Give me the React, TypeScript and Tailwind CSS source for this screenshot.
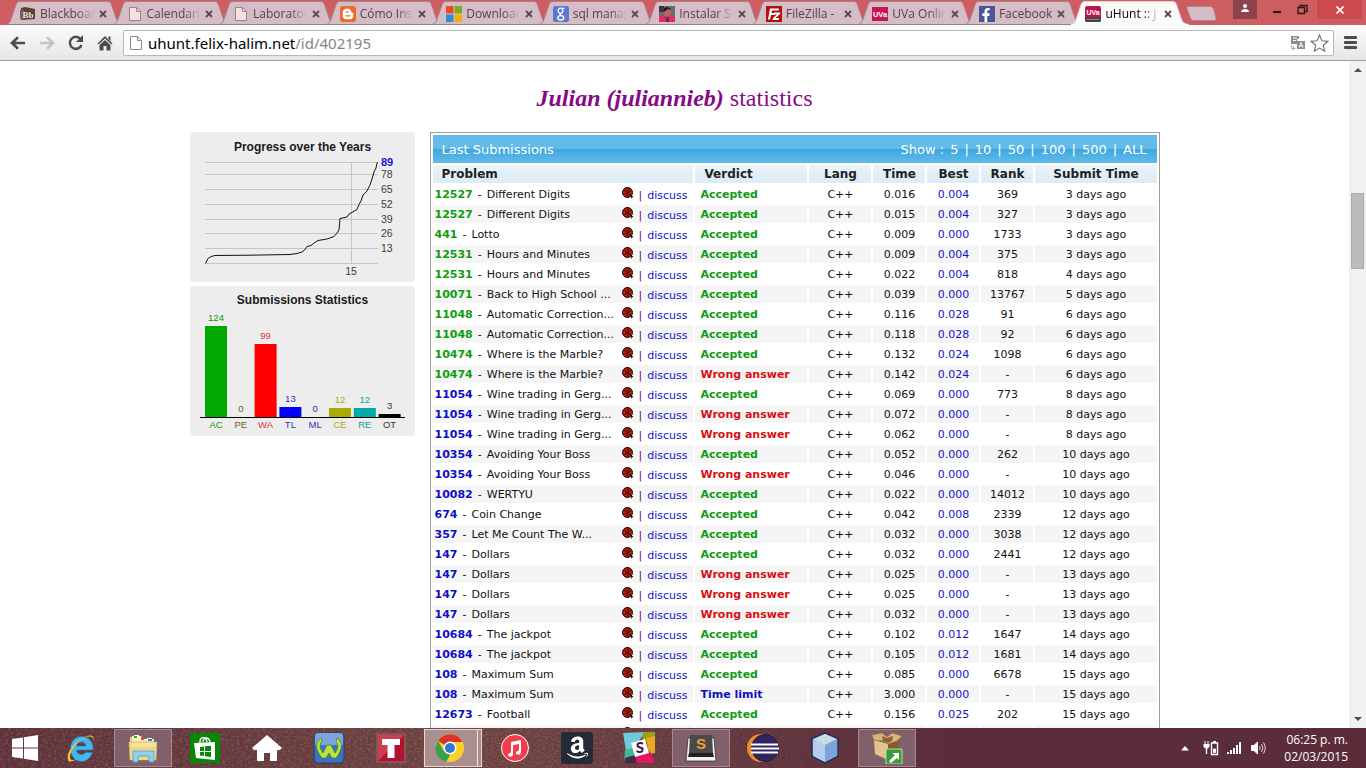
import React from 'react';
import { FaFacebookF, FaAmazon, FaBloggerB } from 'react-icons/fa';

const ui = "font-['Open_Sans','Noto_Sans',sans-serif]";

function PageIcon({ className = '' }: { className?: string }) {
  return (
    <svg viewBox="0 0 16 16" className={`size-4 shrink-0 ${className}`} fill="currentColor">
      <path d="M2.500 1.500h7l4 4v9h-11z" stroke="#8f8789" strokeWidth="1" />
      <path d="M9.500 1.500v4h4" fill="none" stroke="#8f8789" />
    </svg>
  );
}

const favicons: Record<string, React.ReactNode> = {
  bb: (
    <svg viewBox="0 0 16 16" className="size-4 shrink-0">
      <path d="M1 2l4-1 10 2v10l-14 1z" fill="#5b4038" />
      <path d="M0 4h4v9H0z" fill="#7a5b50" />
      <text x="8" y="12" textAnchor="middle" fontSize="9" fontWeight="700" fontFamily="Liberation Serif" fill="#efe3dc">Bb</text>
    </svg>
  ),
  page: <PageIcon className="text-[#f9dfe0]" />,
  blogger: (
    <span className="flex size-4 shrink-0 items-center justify-center rounded-[3px] bg-[#f0682a] text-white">
      <FaBloggerB className="size-3" />
    </span>
  ),
  microsoft: (
    <svg viewBox="0 0 16 16" className="size-4 shrink-0">
      <path d="M0 0h7.500v7.500H0z" fill="#ea4b27" />
      <path d="M8.500 0H16v7.500H8.500z" fill="#7fac1c" />
      <path d="M0 8.500h7.500V16H0z" fill="#2b8fd6" />
      <path d="M8.500 8.500H16V16H8.500z" fill="#f5ab12" />
    </svg>
  ),
  google: (
    <svg viewBox="0 0 16 16" className="size-4 shrink-0">
      <rect width="16" height="16" rx="2" fill="#5f78cf" />
      <g fill="none" stroke="#fff" strokeWidth="1.300">
        <ellipse cx="7.500" cy="4.800" rx="2.300" ry="2.600" />
        <path d="M9 2.300h2.500M7.500 7.400c-1.500 1.200.2 1.700 1.500 2.400" />
        <ellipse cx="7.800" cy="11.800" rx="3" ry="2.200" />
      </g>
    </svg>
  ),
  photo: (
    <svg viewBox="0 0 16 16" className="size-4 shrink-0">
      <path d="M0 0h16v16H0z" fill="#5f6f78" />
      <path d="M0 0h5v6H0z" fill="#3a3236" />
      <path d="M4 3c2-3 7-3 8 1v5l-3 3-4-2z" fill="#b5685c" />
      <path d="M4 5c0-5 7-5 8-1l-3-1-4 3z" fill="#281c20" />
      <path d="M0 10l5-1 3 3 3-3 5 2v5H0z" fill="#e22c63" />
      <path d="M6 10l2 2 2-2v6H7z" fill="#702838" />
    </svg>
  ),
  filezilla: (
    <svg viewBox="0 0 16 16" className="size-4 shrink-0">
      <path d="M0 0h16v16H0z" fill="#b3110f" />
      <path d="M4 2.500h9l-.5 2H6L5.500 7H9l-.5 2H5l-1 4.500H2z" fill="#fff" />
      <path d="M8 6.500h6.500l-.5 1.500-4.500 4H13l-.5 2H6.500l.5-2 4-3.500H8z" fill="#fff" />
    </svg>
  ),
  uva: (
    <svg viewBox="0 0 16 16" className="size-4 shrink-0">
      <path d="M0 1h16v14H0z" fill="#c81456" />
      <text x="8" y="11" textAnchor="middle" fontSize="7.500" fontWeight="700" fontFamily="Liberation Sans" fill="#fff">UVa</text>
    </svg>
  ),
  facebook: (
    <span className="flex size-4 shrink-0 items-end justify-end bg-[#4b5699] pr-0.5 text-white">
      <FaFacebookF className="size-3.5" />
    </span>
  ),
  uhunt: (
    <svg viewBox="0 0 16 16" className="size-4 shrink-0">
      <rect width="16" height="16" rx="2" fill="#c0144f" />
      <path d="M0 11h16v3a2 2 0 0 1-2 2H2a2 2 0 0 1-2-2z" fill="#4a4347" />
      <text x="8" y="8.500" textAnchor="middle" fontSize="7" fontWeight="700" fontFamily="Liberation Sans" fill="#fff">UVa</text>
      <path d="M2 13.500h12" stroke="#a39a9e" strokeDasharray="1.500 .6" />
    </svg>
  ),
};

const tabs = [
  ['bb', 'Blackboar'],
  ['page', 'Calendario'],
  ['page', 'Laborator'],
  ['blogger', 'Cómo Inst'],
  ['microsoft', 'Download'],
  ['google', 'sql manag'],
  ['photo', 'Instalar SQ'],
  ['filezilla', 'FileZilla -'],
  ['uva', 'UVa Onlin'],
  ['facebook', 'Facebook'],
  ['uhunt', 'uHunt :: J'],
];

function TabStrip() {
  return (
    <header className="flex h-[25px] shrink-0 items-start bg-[#cd5d61] pl-1.5">
      <div className="grid w-[1172px] min-w-0 grid-cols-11">
        {tabs.map(([icon, label], i) => {
          const active = i === tabs.length - 1;
          const whole = label === 'Facebook' || label === 'FileZilla -';
          return (
            <div key={label} className={`relative flex h-[25px] items-center pt-0.5 pl-3.5 ${active ? 'z-20' : ''}`}>
              <svg viewBox="0 0 118 25" preserveAspectRatio="none" className="absolute top-0 left-0 h-[25px] w-[calc(100%+11px)]">
                <path
                  d="M0 24.500C3 24 4 22 5 19.500L10 5C11 2 12 1.500 15 1.500H101C104 1.500 105 2 106 5L111 19.500C112 22 114 24 118 24.500Z"
                  fill={active ? '#fbfbfb' : '#d5bdc7'}
                  stroke={active ? '#e6cdd0' : '#a98288'}
                />
                {active ? <path d="M0 24.500H118" stroke="#fbfbfb" /> : <path d="M0 24.500H118" stroke="#927f83" />}
              </svg>
              <button className={`relative flex min-w-0 flex-1 items-center gap-1 text-left ${ui}`}>
                {favicons[icon]}
                <span
                  className={`w-[54px] overflow-hidden text-xs leading-5 whitespace-nowrap ${whole ? '' : 'mask-r-from-70%'} ${active ? 'text-black' : 'text-[#54444a]'}`}
                >
                  {label}
                </span>
              </button>
              <button aria-label={`Close ${label}`} className="relative mr-1 flex size-3 items-center justify-center">
                <svg viewBox="0 0 8 8" className="size-2">
                  <path d="M1 1l6 6M7 1l-6 6" stroke="#5b4a4e" strokeWidth="1.800" />
                </svg>
              </button>
            </div>
          );
        })}
      </div>
      <button aria-label="New tab" className="mt-1.5 ml-2">
        <svg viewBox="0 0 31 15" className="h-[15px] w-[31px]">
          <path d="M3 .5h21c2 0 3 1 3.500 2.500L30 12c.5 2-.5 2.500-2 2.500H8c-2 0-3-1-3.500-2.500L1 2.500C.5 1 1 .5 3 .5z" fill="#d5bdc7" stroke="#b5838a" />
        </svg>
      </button>
      <div className="ml-auto flex h-[19px]">
        <button aria-label="Profile" className="flex w-6 justify-center bg-[#8c434b] pt-1">
          <svg viewBox="0 0 8 8" className="size-2" fill="#fff">
            <circle cx="4" cy="2" r="2" />
            <path d="M0 8c0-4 8-4 8 0z" />
          </svg>
        </button>
        <button aria-label="Minimize" className="flex w-10 items-center justify-center pt-1">
          <span className="h-0.5 w-2 bg-[#2c1517]" />
        </button>
        <button aria-label="Restore" className="flex w-5 items-center justify-start">
          <svg viewBox="0 0 11 11" className="size-[11px]" fill="none" stroke="#2c1517">
            <path d="M1 3.500h6.500v6H1zM3 3V1.500h7v6H8" strokeWidth="1.300" />
          </svg>
        </button>
        <button aria-label="Close window" className="mr-1 flex w-[45px] items-center justify-center bg-[#cb4a4e]">
          <svg viewBox="0 0 8 8" className="size-2">
            <path d="M.5.5l7 7M7.500.5l-7 7" stroke="#fff" strokeWidth="1.600" />
          </svg>
        </button>
      </div>
    </header>
  );
}

function Toolbar() {
  return (
    <nav className="flex h-9 shrink-0 items-center border-b border-[#9f9f9f] bg-linear-to-b from-[#fbfbfb] to-[#e6e6e6] pl-2.5">
      <button aria-label="Back" className="w-[29px]">
        <svg viewBox="0 0 16 14" className="h-3.5 w-4" fill="none" stroke="#4d4d4d" strokeWidth="2.600">
          <path d="M15 7H2M8 1.300L2 7l6 5.700" />
        </svg>
      </button>
      <button aria-label="Forward" className="w-[29px]">
        <svg viewBox="0 0 16 14" className="h-3.5 w-4" fill="none" stroke="#c4c4c4" strokeWidth="2.600">
          <path d="M1 7h13M8 1.300L14 7l-6 5.700" />
        </svg>
      </button>
      <button aria-label="Reload" className="w-[29px]">
        <svg viewBox="0 0 16 16" className="size-4" fill="none" stroke="#4d4d4d" strokeWidth="2.500">
          <path d="M12.500 4A6 6 0 1 0 13.500 10" />
          <path d="M15 0v7H8z" fill="#4d4d4d" stroke="none" />
        </svg>
      </button>
      <button aria-label="Home" className="w-[26px]">
        <svg viewBox="0 0 16 16" className="size-4" fill="#4d4d4d">
          <path d="M8 1l7.500 7.500-1 1L8 3.500 1.500 9.500l-1-1zM11.500 1.500h2V6l-2-2zM8 5l5.500 5v5.500h-4V11h-3v4.500h-4V10z" />
        </svg>
      </button>
      <div className="flex h-[26px] min-w-0 flex-1 items-center gap-1 rounded-[2px] border border-[#b4bab4] bg-white pr-1 pl-1">
        <PageIcon className="text-white" />
        <div className="relative flex-1 font-['Noto_Sans',sans-serif] text-[15px] leading-5">
          <input
            aria-label="Address"
            defaultValue="uhunt.felix-halim.net/id/402195"
            className="block w-full text-transparent caret-black outline-none"
          />
          <span aria-hidden="true" className="pointer-events-none absolute inset-0 text-black">
            uhunt.felix-halim.net<span className="text-[#858585]">/id/402195</span>
          </span>
        </div>
        <button aria-label="Translate">
          <svg viewBox="0 0 16 16" className="size-4" fill="#8d8d8d">
            <path d="M1 1h8v3H7v5H1zM7 6h8v8H7z" />
            <path d="M3 3h4M3 5.500h3" stroke="#fff" />
            <path d="M9 12.500l2-5 2 5M9.700 11h2.600" stroke="#fff" fill="none" />
            <path d="M1.500 10.500v3h4M3.500 11.500v4" stroke="#8d8d8d" fill="none" strokeDasharray="2 1" />
          </svg>
        </button>
        <button aria-label="Bookmark">
          <svg viewBox="0 0 19 18" className="h-[18px] w-[19px]" fill="#fff" stroke="#777" strokeWidth="1.200">
            <path d="M9.500 1.200l2.400 5.600 6 .5-4.600 4 1.400 5.900-5.200-3.100-5.200 3.100 1.400-5.900-4.600-4 6-.5z" />
          </svg>
        </button>
      </div>
      <button aria-label="Menu" className="ml-2.5 mr-[9px] flex w-[13px] flex-col gap-0.5">
        <span className="h-[3px] rounded-[1px] bg-[#4d4d4d]" />
        <span className="h-[3px] rounded-[1px] bg-[#4d4d4d]" />
        <span className="h-[3px] rounded-[1px] bg-[#4d4d4d]" />
      </button>
    </nav>
  );
}

const gridLines: [number, string][] = [
  [42, '78'],
  [57, '65'],
  [72, '52'],
  [87, '39'],
  [101, '26'],
  [116, '13'],
];

function ProgressChart() {
  return (
    <svg viewBox="0 0 225 150" className="block w-full" fontFamily="Liberation Sans, sans-serif">
      <rect width="225" height="150" rx="4" fill="#ededed" />
      <text x="112.500" y="19" textAnchor="middle" fontSize="12" fontWeight="700" fill="#1a1a1a">Progress over the Years</text>
      <g stroke="#c6c6c6" shapeRendering="crispEdges">
        <path d="M15 30.500H188M15 131.500H188M161.500 30V131" />
        {gridLines.map(([y]) => (
          <path key={y} d={`M15 ${y + 0.5}H188`} />
        ))}
      </g>
      <text x="191" y="34" fontSize="11" fontWeight="700" fill="#1414d8">89</text>
      {gridLines.map(([y, label]) => (
        <text key={label} x="191" y={y + 4} fontSize="10.500" fill="#3c3c3c">{label}</text>
      ))}
      <text x="161" y="143" textAnchor="middle" fontSize="10.500" fill="#3c3c3c">15</text>
      <path
        d="M15.500 131.500L18 126.500L21 124.500L25 123.500L60 123.200L100 122.500L107 121.500L112 120L114 118.500L117 114.500L121 113.500L124 111L128 108.500L137 107L144 104.500L147 101L149 98L150 86.500L157 85L159 82L161 81L167 77.500L169 72.500L171 69L173 63L177 59L180 53L182 47L184 40L186 36L187 31L188 30"
        fill="none"
        stroke="#111"
      />
    </svg>
  );
}

const stats: [string, number, number, string, string][] = [
  ['AC', 124, 91, '#00aa00', '#119411'],
  ['PE', 0, 0, '#666600', '#666611'],
  ['WA', 99, 73, '#ff0000', '#e8303a'],
  ['TL', 13, 10, '#0000ff', '#3030d0'],
  ['ML', 0, 0, '#0000aa', '#3030b0'],
  ['CE', 12, 9, '#aaaa00', '#aaaa11'],
  ['RE', 12, 9, '#00aaaa', '#11a0a0'],
  ['OT', 3, 3, '#000000', '#333333'],
];

function SubmissionChart() {
  return (
    <svg viewBox="0 0 225 150" className="block w-full" fontFamily="Liberation Sans, sans-serif">
      <rect width="225" height="150" rx="4" fill="#ededed" />
      <text x="112.500" y="18" textAnchor="middle" fontSize="12" fontWeight="700" fill="#1a1a1a">Submissions Statistics</text>
      {stats.map(([name, count, height, fill, ink], i) => {
        const x = 15 + i * 24.8;
        return (
          <g key={name} textAnchor="middle" fontSize="9.500" fill={ink}>
            <rect x={x} y={131 - height} width="22" height={height} fill={fill} />
            <text x={x + 11} y={126 - height}>{count}</text>
            <text x={x + 11} y="142">{name}</text>
          </g>
        );
      })}
      <path d="M10 131.500H215" stroke="#000" />
    </svg>
  );
}

function BugIcon() {
  return (
    <svg viewBox="0 0 12 12" className="size-3">
      <circle cx="5.500" cy="5.500" r="5" fill="#b3200f" stroke="#1a0504" />
      <path d="M2 3l7 5M6 1v9M2.500 7.500L9 4" stroke="#3d0a06" strokeWidth=".9" />
      <path d="M8.500 8l3 1.500-1 .5-1 2z" fill="#111" />
    </svg>
  );
}

// [number, title, solved, verdict, time, best, rank, age in days]
type Row = [string, string, boolean, 'AC' | 'WA' | 'TL', string, string, string, number];

const rows: Row[] = [
  ['12527', 'Different Digits', true, 'AC', '0.016', '0.004', '369', 3],
  ['12527', 'Different Digits', true, 'AC', '0.015', '0.004', '327', 3],
  ['441', 'Lotto', true, 'AC', '0.009', '0.000', '1733', 3],
  ['12531', 'Hours and Minutes', true, 'AC', '0.009', '0.004', '375', 3],
  ['12531', 'Hours and Minutes', true, 'AC', '0.022', '0.004', '818', 4],
  ['10071', 'Back to High School ...', true, 'AC', '0.039', '0.000', '13767', 5],
  ['11048', 'Automatic Correction...', true, 'AC', '0.116', '0.028', '91', 6],
  ['11048', 'Automatic Correction...', true, 'AC', '0.118', '0.028', '92', 6],
  ['10474', 'Where is the Marble?', true, 'AC', '0.132', '0.024', '1098', 6],
  ['10474', 'Where is the Marble?', true, 'WA', '0.142', '0.024', '-', 6],
  ['11054', 'Wine trading in Gerg...', false, 'AC', '0.069', '0.000', '773', 8],
  ['11054', 'Wine trading in Gerg...', false, 'WA', '0.072', '0.000', '-', 8],
  ['11054', 'Wine trading in Gerg...', false, 'WA', '0.062', '0.000', '-', 8],
  ['10354', 'Avoiding Your Boss', false, 'AC', '0.052', '0.000', '262', 10],
  ['10354', 'Avoiding Your Boss', false, 'WA', '0.046', '0.000', '-', 10],
  ['10082', 'WERTYU', false, 'AC', '0.022', '0.000', '14012', 10],
  ['674', 'Coin Change', false, 'AC', '0.042', '0.008', '2339', 12],
  ['357', 'Let Me Count The W...', false, 'AC', '0.032', '0.000', '3038', 12],
  ['147', 'Dollars', false, 'AC', '0.032', '0.000', '2441', 12],
  ['147', 'Dollars', false, 'WA', '0.025', '0.000', '-', 13],
  ['147', 'Dollars', false, 'WA', '0.025', '0.000', '-', 13],
  ['147', 'Dollars', false, 'WA', '0.032', '0.000', '-', 13],
  ['10684', 'The jackpot', false, 'AC', '0.102', '0.012', '1647', 14],
  ['10684', 'The jackpot', false, 'AC', '0.105', '0.012', '1681', 14],
  ['108', 'Maximum Sum', false, 'AC', '0.085', '0.000', '6678', 15],
  ['108', 'Maximum Sum', false, 'TL', '3.000', '0.000', '-', 15],
  ['12673', 'Football', false, 'AC', '0.156', '0.025', '202', 15],
  ['12673', 'Football', false, 'AC', '0.156', '0.025', '203', 15],
];

const verdicts = {
  AC: ['Accepted', 'text-[#0f9d0f]'],
  WA: ['Wrong answer', 'text-[#d90f17]'],
  TL: ['Time limit', 'text-[#0f0fc4]'],
};

function Submissions() {
  return (
    <table className="w-full table-fixed border-separate border-spacing-0.5 border border-[#9d9d9d] text-center font-['DejaVu_Sans',sans-serif] text-[11px] leading-4 text-[#111]">
      <colgroup>
        <col />
        <col className="w-28" />
        <col className="w-[62px]" />
        <col className="w-[52px]" />
        <col className="w-[52px]" />
        <col className="w-[52px]" />
        <col className="w-[121px]" />
      </colgroup>
      <thead>
        <tr>
          <th colSpan={7} className="h-7 bg-linear-to-b from-[#62bbe9] from-50% via-[#3aa6df] via-50% to-[#62bbe9] p-0 pt-0.5 text-[13px] font-normal text-white">
            <div className="flex justify-between pr-2.5 pl-[9px]">
              <span>Last Submissions</span>
              <span className="flex gap-1.5">
                <span>Show :</span>
                {['5', '10', '50', '100', '500', 'ALL'].map((n, i) => (
                  <React.Fragment key={n}>
                    {i > 0 && <span>|</span>}
                    <a href={`#show-${n}`}>{n}</a>
                  </React.Fragment>
                ))}
              </span>
            </div>
          </th>
        </tr>
        <tr className="text-xs leading-[18px] text-[#222]">
          {['Problem', 'Verdict', 'Lang', 'Time', 'Best', 'Rank', 'Submit Time'].map((h, i) => (
            <th key={h} className={`bg-linear-to-b from-[#eaf3f9] to-[#dcebf5] p-0 font-bold ${i < 2 ? 'pl-[9px] text-left' : ''}`}>
              {h}
            </th>
          ))}
        </tr>
      </thead>
      <tbody>
        {rows.map(([id, title, solved, verdict, time, best, rank, days], i) => (
          <tr key={i} className={i % 2 ? 'bg-[#f5f5f5]' : 'bg-white'}>
            <td className="p-0 pl-0.5">
              <div className="flex h-[18px] justify-between pr-1.5">
                <span className="pt-0.5 whitespace-nowrap">
                  <a href={`#p${id}`} className={`font-bold ${solved ? 'text-[#0f9d0f]' : 'text-[#0f0fc4]'}`}>{id}</a>
                  <span className="mx-[5px]">-</span>
                  {title}
                </span>
                <span className="flex gap-[5px]">
                  <span className="pt-0.5"><BugIcon /></span>
                  <span className="pt-[3px] text-[#800060]">|</span>
                  <a href={`#d${id}`} className="pt-[3px] text-[#1414c8]">discuss</a>
                </span>
              </div>
            </td>
            <td className={`p-0 pt-0.5 pl-[5px] text-left font-bold ${verdicts[verdict][1]}`}>{verdicts[verdict][0]}</td>
            <td className="p-0 pt-0.5">C++</td>
            <td className="p-0 pt-0.5">{time}</td>
            <td className="p-0 pt-0.5 text-[#1414c8]">{best}</td>
            <td className="p-0 pt-0.5">{rank}</td>
            <td className="p-0 pt-0.5">{days} days ago</td>
          </tr>
        ))}
      </tbody>
    </table>
  );
}

function ScrollBar() {
  return (
    <div className="flex w-[17px] shrink-0 flex-col items-center bg-[#f1f1f1] py-1.5">
      <svg viewBox="0 0 8 5" className="h-[5px] w-2"><path d="M0 5l4-4 4 4z" fill="#505050" /></svg>
      <div className="mt-[121px] h-[76px] w-[13px] border border-[#a9a9a9] bg-[#bcbcbc]" />
      <svg viewBox="0 0 8 5" className="mt-auto h-[5px] w-2"><path d="M0 0l4 4 4-4z" fill="#505050" /></svg>
    </div>
  );
}

const apps: [string, boolean, React.ReactNode][] = [
  ['Internet Explorer', false, (
    <>
      <path d="M28 18H11.500c.3 5 6.500 6 9 2.500h7C25 27.500 20 29.500 16 29.500 2 28 2 5.500 16 4.500c8 0 13 6 12 13.500zM11.500 14h9.500c-.5-5.500-9-5.500-9.500 0z" fill="#45b7ec" stroke="#1f7fc0" strokeWidth=".7" />
      <path d="M28.500 9c2-8-6-6-12-2C7 12 1 22 3 28c1 3 6 1 9-1-5 2-7 1-7-2C5 18 14 8 20 5.500c5-2 9-1.500 8.500 3.500z" fill="#f3c22c" />
    </>
  )],
  ['File Explorer', true, (
    <>
      <path d="M3 5h8l2 3h14v4H3z" fill="#e8cf75" />
      <path d="M5 4h9l1 3h12v3H5z" fill="#f8eeb8" />
      <path d="M7 3h5v3H7zM20 6h5v3h-5z" fill="#fff" />
      <path d="M7 4h3v2H7z" fill="#2fa84c" /><path d="M14 6h3v2h-3z" fill="#d74b39" /><path d="M21 7h4v2h-4z" fill="#3178c8" />
      <path d="M2 10h28l-1 18H3z" fill="#f5e39a" stroke="#cfae56" strokeWidth=".7" />
      <path d="M3 15h26l-1 13H4z" fill="#eed687" />
      <path d="M6 30V19h21v11h-5v-6H11v6z" fill="#8fd2ee" stroke="#4a9ec8" strokeWidth=".8" />
    </>
  )],
  ['Store', false, (
    <>
      <path d="M1 1h30v30H1z" fill="#078607" />
      <path d="M11 11c-1-7 6-7 7-1M14 10c0-6 7-5 7 1" fill="none" stroke="#fff" strokeWidth="1.300" />
      <path d="M5 11l21-1v18L7 26z" fill="#fff" />
      <path d="M11 15l4-.5V19h-4zM16 14.300l6-.6V19h-6zM11 20h4v4l-4-.5zM16 20h6v5l-6-.8z" fill="#078607" />
    </>
  )],
  ['Home', false, <path d="M16 3l15 13-2 2h-3v11h-7v-8h-6v8H6V18H3l-2-2z" fill="#fff" />],
  ['WampServer', false, (
    <>
      <rect x="1" y="1" width="30" height="30" rx="4" fill="#3c72bd" stroke="#1f3f78" />
      <path d="M2 4a3 3 0 0 1 3-3h22a3 3 0 0 1 3 3v9H2z" fill="#7aa5dc" />
      <path d="M8 6C2 11 2 17 9 26h4l3-5 3 5h4c7-9 7-15 1-20l-1 3c3 4 2 8-1 12l-4-8h-4l-4 8c-3-4-4-8-1-12z" fill="#b8e33a" stroke="#4c7a28" strokeWidth=".7" />
    </>
  )],
  ['Tracker', false, (
    <>
      <path d="M1 1h30v30H1z" fill="#8d5059" /><path d="M3 3h26v26H3z" fill="#b3122c" />
      <path d="M3 3h26L3 29z" fill="#ca4053" />
      <path d="M7 7h18v6h-5.500v13h-7V13H7z" fill="#fff" />
    </>
  )],
  ['Chrome', true, (
    <>
      <circle cx="16" cy="16" r="14" fill="#f9d02c" />
      <path d="M16 16L4 9A14 14 0 0 1 28.500 10H16z" fill="#d9332b" />
      <path d="M4 9l6.500 11 6 2-4 7.500C3 28-1 18 4 9z" fill="#37a24b" />
      <circle cx="16" cy="16" r="6.500" fill="#fff" /><circle cx="16" cy="16" r="5" fill="#2e79cf" />
    </>
  )],
  ['iTunes', false, (
    <>
      <circle cx="16" cy="16" r="13.500" fill="#f33c4d" stroke="#fff" />
      <path d="M12 10l10-2v12c0 4-5 3-5 1 0-2 3-2 3-3v-6l-6 1.300V22c0 4-5 3-5 1 0-2 3-2 3-3z" fill="#fff" />
    </>
  )],
  ['Amazon', false, (
    <>
      <rect width="32" height="32" rx="3" fill="#242b34" />
      <FaAmazon x="4" y="3" size="25" color="#fff" />
    </>
  )],
  ['Slack', false, (
    <>
      <path d="M0 1l22-1-11 17L3 19z" fill="#6ecadc" /><path d="M20 0h12v7l-13 4z" fill="#9ba01e" />
      <path d="M23 6l9-2v17l-6 1z" fill="#e9a820" /><path d="M2 18l8-2 6 15H1z" fill="#3eb991" />
      <path d="M12 24l15-5 5 12H14z" fill="#e01765" /><path d="M2 26l10-3 2 8H1z" fill="#472a49" />
      <path d="M8 11l14-4 4 14-14 4z" fill="#fff" />
      <text x="17" y="21" textAnchor="middle" fontSize="15" fontWeight="900" fontFamily="Lato" fill="#3c2142">S</text>
    </>
  )],
  ['Sublime Text', true, (
    <>
      <path d="M3 6h26l2 23H1z" fill="#f1f1f1" stroke="#222" strokeWidth=".7" />
      <path d="M5 3h22l1 18H4z" fill="#4a4a4a" /><path d="M4 21h24l1 4H3z" fill="#222" />
      <text x="16" y="17" textAnchor="middle" fontSize="15" fontWeight="700" fontFamily="Liberation Sans" fill="#f29a35">S</text>
    </>
  )],
  ['Eclipse', false, (
    <>
      <circle cx="14" cy="16" r="14" fill="#f28c25" /><circle cx="18" cy="16" r="13.500" fill="#302560" stroke="#211a45" />
      <path d="M4 11.500h27v2H4zM4 15.500h28v2H4zM4 19.500h27v2H4z" fill="#fff" />
    </>
  )],
  ['NetBeans', false, (
    <>
      <path d="M16 1l13 6v17l-13 7L3 24V7z" fill="#a5c4e8" stroke="#1c2c5c" strokeWidth="1.500" />
      <path d="M16 2l12 5-12 6L4 7z" fill="#c5dfdf" /><path d="M16 13l12-6v17l-12 6z" fill="#7fa3d6" /><path d="M4 8l12 5v17L4 24z" fill="#b5cbef" />
    </>
  )],
  ['Package', true, (
    <>
      <path d="M3 8l14 4v16L4 22z" fill="#e2c493" /><path d="M17 12l11-4v14l-11 6z" fill="#8a5a2c" />
      <path d="M1 3l10-2 5 4 5-4 10 3-5 5-9 3-5-3-9-1z" fill="#d9b57e" stroke="#9d713c" strokeWidth=".7" />
      <path d="M11 4l5 2 6-2-1 5-4 2-5-2z" fill="#8f6232" />
      <path d="M15 17h16v15H15z" fill="#3c9a3c" stroke="#b7dba8" />
      <path d="M18 29l6-6-3-2h7v7l-2-2-6 5z" fill="#fff" />
    </>
  )],
];

function TaskBar() {
  return (
    <footer className="relative flex h-10 shrink-0 items-stretch overflow-hidden bg-linear-to-r from-[#5c3038] via-[#6b4240] via-35% to-[#5b2d3b] to-70%">
      <svg className="absolute inset-y-0 left-0 h-full w-2/3 mask-r-from-60% opacity-25" aria-hidden="true">
        <filter id="grain" x="0" y="0" width="100%" height="100%">
          <feTurbulence type="fractalNoise" baseFrequency=".35 .6" numOctaves="2" seed="4" />
          <feColorMatrix values="0 0 0 0 .7  0 0 0 0 .5  0 0 0 0 .4  2 0 0 0 -.8" />
        </filter>
        <rect width="100%" height="100%" filter="url(#grain)" />
      </svg>
      <button aria-label="Start" className="relative flex w-[50px] items-center justify-center">
        <svg viewBox="0 0 26 26" className="size-[26px]" fill="#fff">
          <path d="M0 4l11-1.500V12.500H0zM12 2.300L26 0v12.500H12zM0 13.500h11v10L0 22zM12 13.500h14V26l-14-2.300z" />
        </svg>
      </button>
      <div className="relative flex">
        {apps.map(([name, open, art]) => (
          <div key={name} className="flex w-[62px] items-stretch justify-center py-px">
            <button
              aria-label={name}
              className={`relative flex w-[58px] items-center justify-center ${
                name === 'Chrome'
                  ? 'border border-[#e5d8d6] bg-[#a98f8e] pr-1.5'
                  : open
                    ? 'border border-[#a88b90] bg-[#80606a]'
                    : ''
              }`}
            >
              <svg viewBox="0 0 32 32" className="size-8">{art}</svg>
              {name === 'Chrome' && <span className="absolute inset-y-0 right-[3px] w-px bg-[#f1e8e6]" />}
            </button>
          </div>
        ))}
      </div>
      <div className="relative ml-auto flex items-center gap-2 pr-[18px] text-white">
        <svg viewBox="0 0 8 5" className="mr-1.5 h-[5px] w-2"><path d="M0 4.500L4 0l4 4.500z" fill="#fff" /></svg>
        <svg viewBox="0 0 16 16" className="size-4" fill="none" stroke="#fff">
          <path d="M8.500 3h6v11.500h-6zM10 1.800h3" strokeWidth="1.400" />
          <path d="M10.500 9h2v3.500h-2z" fill="#fff" />
          <path d="M2 1v3M5 1v3" />
          <path d="M.5 4h6v2.500l-1.500 2H2L.5 6.500z" fill="#fff" stroke="none" />
          <path d="M3.500 8v6" strokeWidth="1.400" />
        </svg>
        <svg viewBox="0 0 16 12" className="h-3 w-4" fill="#fff">
          <path d="M0 10h2v2H0zM3 8h2v4H3zM6 6h2v6H6zM9 3h2v9H9zM12 0h2v12h-2z" />
        </svg>
        <svg viewBox="0 0 15 14" className="h-3.5 w-[15px]" fill="none" stroke="#fff">
          <path d="M.5 4.500h2.500L6.500 1v12L3 9.500H.5z" fill="#fff" />
          <path d="M8.500 5q1.500 2 0 4M10.500 3q3 4 0 8M12.500 1.500q3.500 5.500 0 11" opacity=".8" />
        </svg>
        <div className={`ml-2.5 text-right text-xs leading-[17px] ${ui}`}>
          <div>06:25 p. m.</div>
          <div>02/03/2015</div>
        </div>
      </div>
    </footer>
  );
}

export default function App() {
  return (
    <div className="flex h-screen flex-col overflow-hidden bg-white">
      <TabStrip />
      <Toolbar />
      <div className="flex min-h-0 flex-1">
        <main className="min-w-0 flex-1 overflow-hidden">
          <div className="mx-auto max-w-[970px] pt-[19px]">
            <h1 className="text-center font-['Liberation_Serif',serif] text-2xl leading-9 text-[#860a86]">
              <b><i>Julian (juliannieb)</i></b> statistics
            </h1>
            <div className="mt-4 flex items-start gap-[15px]">
              <aside className="flex w-[225px] shrink-0 flex-col gap-1">
                <ProgressChart />
                <SubmissionChart />
              </aside>
              <section className="min-w-0 flex-1">
                <Submissions />
              </section>
            </div>
          </div>
        </main>
        <ScrollBar />
      </div>
      <TaskBar />
    </div>
  );
}
